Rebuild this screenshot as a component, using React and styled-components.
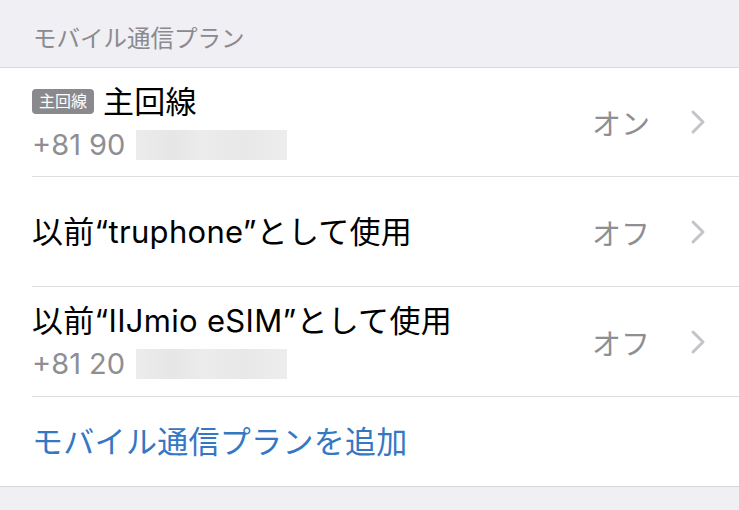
import React from 'react'
import styled, { createGlobalStyle } from 'styled-components'

const GlobalStyle = createGlobalStyle`
  html, body {
    margin: 0;
    padding: 0;
    background: #efeff4;
    font-family: Inter, "Noto Sans CJK JP", sans-serif;
    -webkit-font-smoothing: antialiased;
  }
`

const Page = styled.div`
  width: 739px;
  height: 510px;
  overflow: hidden;
  background: #efeff4;
`

const SectionHeader = styled.div`
  height: 68px;
  box-sizing: border-box;
  padding: 25px 0 0 33px;
  font-size: 23.5px;
  line-height: 28px;
  color: #8a8a8f;
  border-bottom: 1px solid #d9d9de;
`

const List = styled.div`
  background: #fff;
  border-bottom: 1px solid #d6d6db;
`

const Row = styled.div`
  height: ${p => p.$h || 110}px;
  margin-left: 32px;
  padding-right: 33px;
  display: flex;
  align-items: center;
  border-bottom: ${p => (p.$last ? 'none' : '1px solid #dedee2')};
  box-sizing: border-box;
`

const Texts = styled.div`
  flex: 1;
  display: flex;
  flex-direction: column;
  gap: 5px;
`

const Title = styled.div`
  display: flex;
  align-items: center;
  font-size: 31px;
  line-height: 40px;
  letter-spacing: 0.3px;
  color: ${p => (p.$link ? '#3478c4' : '#000')};
  white-space: nowrap;
`

const Badge = styled.span`
  display: inline-block;
  background: #8a8a8e;
  color: #fff;
  font-size: 16px;
  line-height: 25px;
  letter-spacing: 0;
  padding: 0 7px;
  border-radius: 4px;
  margin-right: 9px;
`

const Subtitle = styled.div`
  display: flex;
  align-items: center;
  font-size: 29px;
  line-height: 36px;
  color: #8e8e93;
`

const Blur = styled.span`
  display: inline-block;
  width: 151px;
  height: 30px;
  margin-left: 11px;
  background: linear-gradient(90deg, #ececec 0%, #e6e6e6 25%, #ececec 45%, #e8e8e8 70%, #ededed 100%);
`

const Value = styled.span`
  font-size: 29px;
  color: #8e8e93;
  margin-right: 40px;
`

const Chevron = () => (
  <svg width="16" height="26" viewBox="0 0 16 26">
    <path d="M3 3 L13 13 L3 23" fill="none" stroke="#c4c4c8" strokeWidth="3" strokeLinecap="round" strokeLinejoin="round" />
  </svg>
)

const plans = [
  { title: '主回線', badge: '主回線', number: '+81 90', value: 'オン' },
  { title: '以前“truphone”として使用', value: 'オフ' },
  { title: '以前“IIJmio eSIM”として使用', number: '+81 20', value: 'オフ' },
]

export default function App() {
  return (
    <Page>
      <GlobalStyle />
      <SectionHeader>モバイル通信プラン</SectionHeader>
      <List>
        {plans.map((p, i) => (
          <Row key={i} $h={i === 0 ? 109 : 110}>
            <Texts>
              <Title>
                {p.badge && <Badge>{p.badge}</Badge>}
                {p.title}
              </Title>
              {p.number && (
                <Subtitle>
                  {p.number}
                  <Blur />
                </Subtitle>
              )}
            </Texts>
            <Value>{p.value}</Value>
            <Chevron />
          </Row>
        ))}
        <Row $h={89} $last>
          <Title $link>モバイル通信プランを追加</Title>
        </Row>
      </List>
    </Page>
  )
}
